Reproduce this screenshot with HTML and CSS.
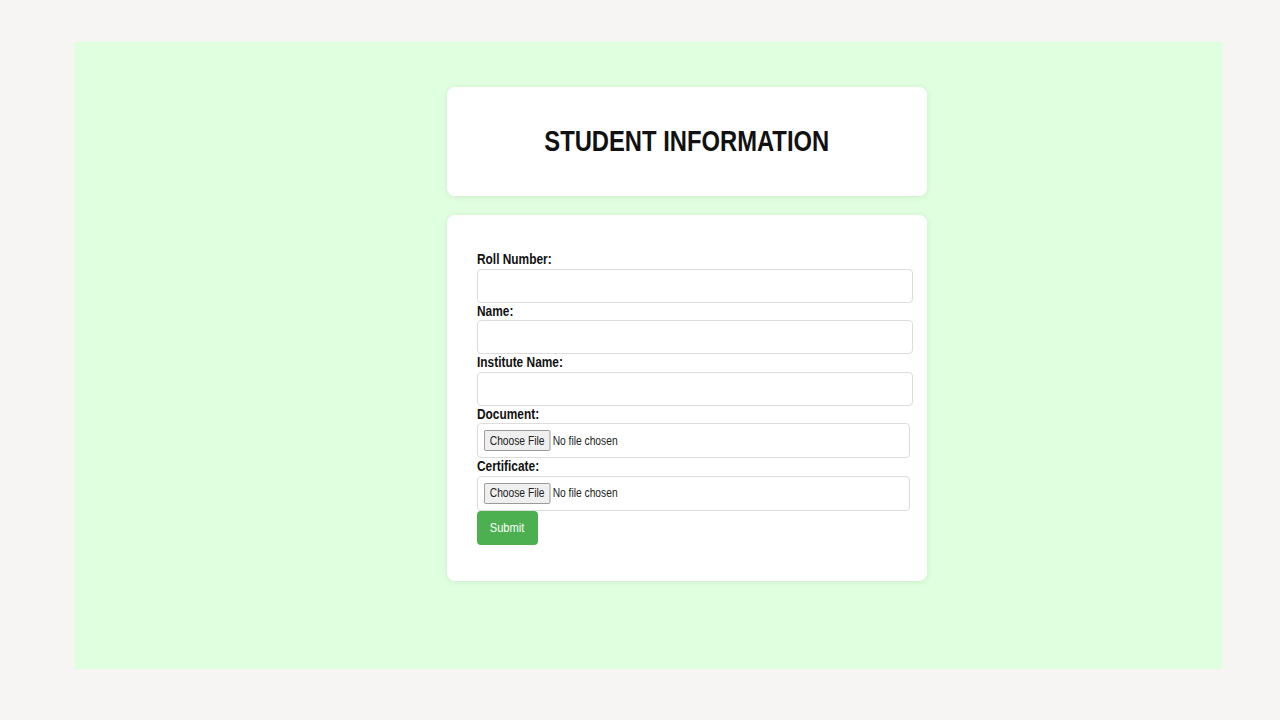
FILE: index.html
```html
<!DOCTYPE html>
<html lang="en">
<head>
<meta charset="utf-8">
<title>Student Information</title>
<link rel="stylesheet" href="styles.css">
</head>
<body>
<div class="frame">
  <div class="column">
    <header class="card head-card">
      <h1 class="title">STUDENT INFORMATION</h1>
    </header>
    <main class="card form-card">
      <form class="form">
        <label class="label" for="roll"><span class="narrow">Roll Number:</span></label>
        <input class="text-input" id="roll" type="text">
        <label class="label" for="name"><span class="narrow">Name:</span></label>
        <input class="text-input" id="name" type="text">
        <label class="label" for="inst"><span class="narrow">Institute Name:</span></label>
        <input class="text-input" id="inst" type="text">
        <label class="label" for="doc"><span class="narrow">Document:</span></label>
        <div class="file-box" id="doc"><span class="narrow file-inner"><span class="file-btn">Choose File</span><span class="file-text">No file chosen</span></span></div>
        <label class="label" for="cert"><span class="narrow">Certificate:</span></label>
        <div class="file-box" id="cert"><span class="narrow file-inner"><span class="file-btn">Choose File</span><span class="file-text">No file chosen</span></span></div>
        <button class="submit" type="button"><span class="submit-text">Submit</span></button>
      </form>
    </main>
  </div>
</div>
</body>
</html>
```
FILE: styles.css
```css
* { box-sizing: border-box; }
html, body { margin: 0; padding: 0; }
body {
  background: #f6f5f3;
  width: 1280px;
  height: 720px;
  padding: 42px 57px 51px 74px;
  font-family: "Liberation Sans", Arial, sans-serif;
  color: #111;
}
.frame {
  width: 1149px;
  height: 627px;
  background: #e0ffdf;
  padding-top: 45px;
  padding-left: 373px;
}
.column {
  width: 480px;
  display: flex;
  flex-direction: column;
  gap: 19px;
}
.card {
  background: #fff;
  border-radius: 8px;
  box-shadow: 0 1px 6px rgba(0, 0, 0, 0.08);
}
.head-card {
  height: 109px;
  display: flex;
  align-items: center;
  justify-content: center;
}
.title {
  margin: 0;
  font-size: 29px;
  font-weight: bold;
  color: #111;
  transform: scaleX(0.82);
  transform-origin: center;
}
.narrow {
  display: inline-block;
  transform: scaleX(0.82);
  transform-origin: left center;
  white-space: nowrap;
}
.form-card {
  height: 366px;
  padding: 36px 14px 0 30px;
}
.form {
  display: flex;
  flex-direction: column;
  align-items: flex-start;
}
.label {
  display: block;
  font-size: 14.5px;
  font-weight: bold;
  line-height: 17.5px;
  height: 17.5px;
  color: #111;
}
.text-input {
  width: 436px;
  height: 34px;
  border: 1px solid #dcdcdc;
  border-radius: 4px;
  background: #fff;
  padding: 0 8px;
  margin: 0;
}
.file-box {
  width: 433px;
  height: 35px;
  border: 1px solid #dcdcdc;
  border-radius: 4px;
  display: flex;
  align-items: center;
  padding-left: 6px;
  font-size: 12.5px;
  color: #222;
}
.file-inner {
  display: inline-flex;
  align-items: center;
}
.file-btn {
  display: inline-flex;
  align-items: center;
  height: 21px;
  padding: 0 6px;
  background: #efefef;
  border: 1px solid #8f8f8f;
  border-radius: 2px;
  margin-right: 3px;
  color: #222;
}
.submit {
  width: 61px;
  height: 34px;
  border: none;
  border-radius: 4px;
  background: #4caf50;
  color: #fff;
  font-family: inherit;
  font-size: 13.5px;
  padding: 0;
  display: flex;
  align-items: center;
  justify-content: center;
}
.submit-text {
  display: inline-block;
  transform: scaleX(0.82);
}
```
